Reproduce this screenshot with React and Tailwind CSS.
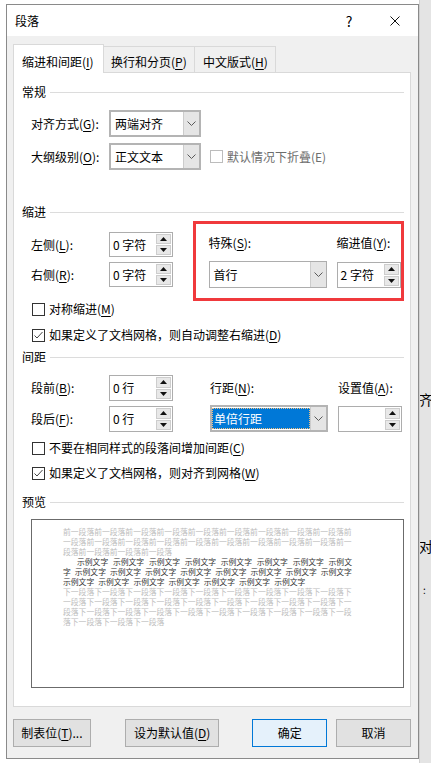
import React from 'react';

const U = ({ children }) => <span className="underline underline-offset-[2px] decoration-1">{children}</span>;

function Chevron() {
  return (
    <svg width="9" height="5" viewBox="0 0 9 5">
      <path d="M0.5 0.5L4.5 4.5L8.5 0.5" fill="none" stroke="#5a5a5a" strokeWidth="1" />
    </svg>
  );
}

function Select({ value, className, thick, selected }) {
  return (
    <div className={`flex bg-white ${thick ? 'border-2 border-[#b4b4b4]' : 'border border-[#adadad]'} ${className}`}>
      {selected ? (
        <div className="flex-1 flex py-[1px]">
          <div className="flex-1 flex items-center pl-[2px] bg-[#0078d7] text-white outline-1 outline-dotted outline-[#f0c080] -outline-offset-1">{value}</div>
        </div>
      ) : (
        <div className="flex-1 flex items-center pl-[4px]">{value}</div>
      )}
      <div className="w-[16px] bg-[#e5e5e5] border-l border-[#cccccc] flex items-center justify-center">
        <Chevron />
      </div>
    </div>
  );
}

function Tri({ down }) {
  return (
    <svg width="7" height="4" viewBox="0 0 7 4">
      <polygon points={down ? '0,0 7,0 3.5,4' : '3.5,0 7,4 0,4'} fill="#111" />
    </svg>
  );
}

function Spinner({ value, className }) {
  return (
    <div className={`flex w-[64px] bg-white border border-[#adadad] ${className}`}>
      <div className="flex-1 flex items-center pl-[3px]">{value}</div>
      <div className="w-[16px] flex flex-col gap-[1px] py-[1px] pr-[1px]">
        <div className="flex-1 bg-[#e8e8e8] border border-[#cdcdcd] flex items-center justify-center"><Tri /></div>
        <div className="flex-1 bg-[#e8e8e8] border border-[#cdcdcd] flex items-center justify-center"><Tri down /></div>
      </div>
    </div>
  );
}

function Check({ checked }) {
  return (
    <div className="w-[13px] h-[13px] border border-[#333333] bg-white">
      {checked && (
        <svg width="11" height="11" viewBox="0 0 11 11">
          <path d="M1.5 5.5L4 8L9.5 2" fill="none" stroke="#444" strokeWidth="1" />
        </svg>
      )}
    </div>
  );
}

function Heading({ text, className }) {
  return (
    <div className={`flex items-center h-[16px] ${className}`}>
      <span>{text}</span>
      <div className="flex-1 h-px bg-[#dcdcdc] ml-[4px]" />
    </div>
  );
}

function CheckRow({ checked, children, className }) {
  return (
    <div className={`flex items-center h-[16px] pl-[10px] ${className}`}>
      <Check checked={checked} />
      <span className="ml-[4px]">{children}</span>
    </div>
  );
}

const unit = '示例文字';

export default function App() {
  return (
    <div className="w-[431px] h-[763px] overflow-hidden bg-white flex font-['Microsoft_YaHei_UI','Noto_Sans_CJK_SC',sans-serif] text-[12px] leading-[16px] text-black">
      <div className="w-[6px]" />
      <div className="mt-[4px] w-[413px] h-[755px] border border-[#8a8a8a] bg-[#f0f0f0] flex flex-col">
        {/* title bar */}
        <div className="h-[31px] bg-white flex items-center">
          <span className="pl-[8px]">段落</span>
          <div className="ml-auto w-[46px] text-center text-[14px]">?</div>
          <div className="w-[46px] flex justify-center">
            <svg width="10" height="10" viewBox="0 0 10 10">
              <path d="M0.5 0.5L9.5 9.5M9.5 0.5L0.5 9.5" stroke="#111" strokeWidth="1" />
            </svg>
          </div>
        </div>

        <div className="pl-[6px] pr-[7px] pt-[8px]">
          {/* tabs */}
          <div className="flex items-end h-[28px]">
            <div className="relative z-10 -mb-px h-[29px] w-[91px] bg-white border border-b-0 border-[#d9d9d9] pl-[8px] pt-[9px]">
              缩进和间距(<U>I</U>)
            </div>
            <div className="h-[26px] w-[92px] -ml-px bg-[#f0f0f0] border border-b-0 border-[#d9d9d9] pl-[7px] pt-[7px]">
              换行和分页(<U>P</U>)
            </div>
            <div className="h-[26px] w-[82px] -ml-px bg-[#f0f0f0] border border-b-0 border-[#d9d9d9] pl-[8px] pt-[7px]">
              中文版式(<U>H</U>)
            </div>
          </div>

          {/* panel */}
          <div className="h-[635px] bg-white border border-[#d9d9d9] pl-[8px] pr-[6px]">
            <Heading text="常规" className="mt-[11px]" />
            <div className="mt-[10px] flex items-center pl-[9px]">
              <div className="w-[78px]">对齐方式(<U>G</U>):</div>
              <Select value="两端对齐" className="w-[92px] h-[27px]" thick />
            </div>
            <div className="mt-[6px] flex items-center pl-[9px]">
              <div className="w-[78px]">大纲级别(<U>O</U>):</div>
              <Select value="正文文本" className="w-[92px] h-[27px]" thick />
              <div className="ml-[9px] w-[13px] h-[13px] border border-[#bcbcbc]" />
              <div className="ml-[4px] text-[#6d6d6d]">默认情况下折叠(E)</div>
            </div>

            <Heading text="缩进" className="mt-[34px]" />
            <div className="mt-[1px] flex">
              <div className="w-[172px] pt-[11px]">
                <div className="flex items-center pl-[9px]">
                  <div className="w-[78px]">左侧(<U>L</U>):</div>
                  <Spinner value="0 字符" className="h-[25px]" />
                </div>
                <div className="mt-[5px] flex items-center pl-[9px]">
                  <div className="w-[78px]">右侧(<U>R</U>):</div>
                  <Spinner value="0 字符" className="h-[25px]" />
                </div>
              </div>
              <div className="w-[213px] h-[80px] border-[3px] border-[#f0393c] pl-[13px] pt-[11px] flex">
                <div className="w-[118px]">
                  <div>特殊(<U>S</U>):</div>
                  <Select value="首行" className="mt-[10px] w-[118px] h-[27px]" />
                </div>
                <div className="ml-[10px]">
                  <div>缩进值(<U>Y</U>):</div>
                  <Spinner value="2 字符" className="mt-[11px] h-[26px]" />
                </div>
              </div>
            </div>

            <CheckRow>对称缩进(<U>M</U>)</CheckRow>
            <CheckRow checked className="mt-[10px]">如果定义了文档网格，则自动调整右缩进(<U>D</U>)</CheckRow>

            <Heading text="间距" className="mt-[6px]" />
            <div className="mt-[10px] flex">
              <div className="w-[172px]">
                <div className="flex items-center pl-[9px]">
                  <div className="w-[78px]">段前(<U>B</U>):</div>
                  <Spinner value="0 行" className="h-[26px]" />
                </div>
                <div className="mt-[5px] flex items-center pl-[9px]">
                  <div className="w-[78px]">段后(<U>F</U>):</div>
                  <Spinner value="0 行" className="h-[26px]" />
                </div>
              </div>
              <div className="pl-[16px] pt-[5px] flex">
                <div className="w-[118px]">
                  <div>行距(<U>N</U>):</div>
                  <Select value="单倍行距" className="mt-[9px] w-[118px] h-[27px]" thick selected />
                </div>
                <div className="ml-[10px]">
                  <div>设置值(<U>A</U>):</div>
                  <Spinner value="" className="mt-[10px] h-[26px]" />
                </div>
              </div>
            </div>

            <CheckRow className="mt-[8px]">不要在相同样式的段落间增加间距(<U>C</U>)</CheckRow>
            <CheckRow checked className="mt-[9px]">如果定义了文档网格，则对齐到网格(<U>W</U>)</CheckRow>

            <Heading text="预览" className="mt-[13px]" />
            <div className="mt-[9px] ml-[9px] h-[169px] border border-[#6b6b6b] pt-[7px] pl-[31px] text-[7.8px] leading-[10px] whitespace-nowrap">
              <div className="w-[289px] text-[#bdbdbd]">
                <div>{'前一段落'.repeat(9)}前</div>
                <div>{'一段落前'.repeat(9)}一</div>
                <div>段落前一段落前一段落前一段落</div>
              </div>
              <div className="w-[289px] text-[#333333]">
                <div className="flex justify-between pl-[14px]">
                  {[unit, unit, unit, unit, unit, unit, unit].map((u, i) => <span key={i}>{u}</span>)}
                  <span>示例文</span>
                </div>
                <div className="flex justify-between">
                  <span>字</span>
                  {[unit, unit, unit, unit, unit, unit, unit, unit].map((u, i) => <span key={i}>{u}</span>)}
                </div>
                <div className="flex gap-[4px]">
                  {[unit, unit, unit, unit, unit, unit, unit].map((u, i) => <span key={i}>{u}</span>)}
                </div>
              </div>
              <div className="w-[289px] text-[#bdbdbd]">
                <div>{'下一段落'.repeat(9)}下</div>
                <div>{'一段落下'.repeat(9)}一</div>
                <div>{'段落下一'.repeat(9)}段</div>
                <div>落下一段落下一段落下一段落</div>
              </div>
            </div>
          </div>

          {/* buttons */}
          <div className="mt-[12px] flex h-[28px]">
            <div className="w-[78px] bg-[#e1e1e1] border border-[#adadad] flex items-center justify-center">制表位(<U>T</U>)...</div>
            <div className="ml-[34px] w-[95px] bg-[#e1e1e1] border border-[#adadad] flex items-center justify-center">设为默认值(<U>D</U>)</div>
            <div className="ml-[33px] w-[75px] bg-[#e5f1fb] border border-[#0078d7] flex items-center justify-center">确定</div>
            <div className="ml-[9px] w-[75px] bg-[#e1e1e1] border border-[#adadad] flex items-center justify-center">取消</div>
          </div>
        </div>
      </div>
      <div className="relative flex-1 bg-[#e4e4e4] border-l border-[#d0d0d0] overflow-hidden text-[14px] leading-[16px]">
        <span className="absolute left-[-1px] top-[391px]">齐</span>
        <span className="absolute left-[-1px] top-[538px]">对</span>
        <span className="absolute left-[3px] top-[582px] text-[10px]">:</span>
      </div>
    </div>
  );
}
